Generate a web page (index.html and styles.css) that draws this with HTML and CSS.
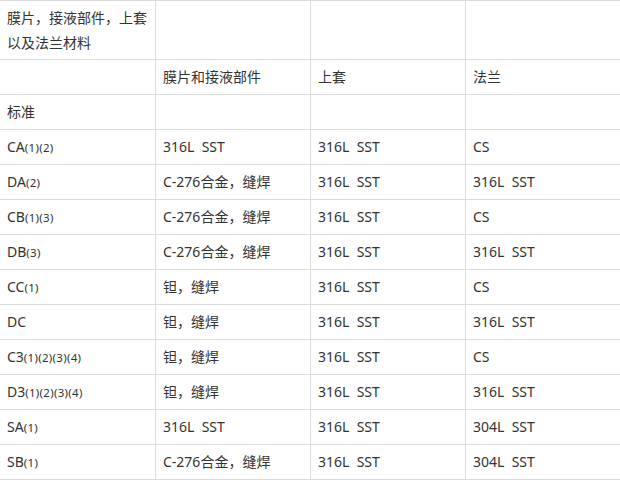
FILE: index.html
```html
<!DOCTYPE html>
<html lang="zh-CN">
<head>
<meta charset="utf-8">
<title>材料表</title>
<link rel="stylesheet" href="styles.css">
</head>
<body>
<table class="spec">
  <colgroup><col class="c1"><col class="c2"><col class="c3"><col class="c4"></colgroup>
  <tbody>
    <tr class="head"><td>膜片，接液部件，上套以及法兰材料</td><td></td><td></td><td></td></tr>
    <tr><td></td><td>膜片和接液部件</td><td>上套</td><td>法兰</td></tr>
    <tr><td>标准</td><td></td><td></td><td></td></tr>
    <tr><td>CA<span class="n">(1)(2)</span></td><td>316L&nbsp; SST</td><td>316L&nbsp; SST</td><td>CS</td></tr>
    <tr><td>DA<span class="n">(2)</span></td><td>C-276合金，缝焊</td><td>316L&nbsp; SST</td><td>316L&nbsp; SST</td></tr>
    <tr><td>CB<span class="n">(1)(3)</span></td><td>C-276合金，缝焊</td><td>316L&nbsp; SST</td><td>CS</td></tr>
    <tr><td>DB<span class="n">(3)</span></td><td>C-276合金，缝焊</td><td>316L&nbsp; SST</td><td>316L&nbsp; SST</td></tr>
    <tr><td>CC<span class="n">(1)</span></td><td>钽，缝焊</td><td>316L&nbsp; SST</td><td>CS</td></tr>
    <tr><td>DC</td><td>钽，缝焊</td><td>316L&nbsp; SST</td><td>316L&nbsp; SST</td></tr>
    <tr><td>C3<span class="n">(1)(2)(3)(4)</span></td><td>钽，缝焊</td><td>316L&nbsp; SST</td><td>CS</td></tr>
    <tr><td>D3<span class="n">(1)(2)(3)(4)</span></td><td>钽，缝焊</td><td>316L&nbsp; SST</td><td>316L&nbsp; SST</td></tr>
    <tr><td>SA<span class="n">(1)</span></td><td>316L&nbsp; SST</td><td>316L&nbsp; SST</td><td>304L&nbsp; SST</td></tr>
    <tr><td>SB<span class="n">(1)</span></td><td>C-276合金，缝焊</td><td>316L&nbsp; SST</td><td>304L&nbsp; SST</td></tr>
  </tbody>
</table>
</body>
</html>
```

FILE: styles.css
```css
html, body {
  margin: 0;
  padding: 0;
  background: #fff;
  overflow: hidden;
}
.spec {
  border-collapse: separate;
  border-spacing: 0;
  table-layout: fixed;
  width: 621px;
  font-family: "Noto Sans", "Noto Sans CJK SC", sans-serif;
  font-size: 14px;
  color: #333;
}
.c1 { width: 156px; }
.c2, .c3, .c4 { width: 155px; }
.spec td {
  box-sizing: border-box;
  height: 35px;
  padding: 0 6px 0 7px;
  line-height: 20px;
  vertical-align: middle;
  border-right: 1px solid #dcdcdc;
  border-bottom: 1px solid #dcdcdc;
  word-break: break-all;
}
.spec tr.head td {
  height: 60px;
  border-top: 1px solid #dcdcdc;
  line-height: 25px;
}
.n {
  font-size: 11.5px;
  letter-spacing: 0.3px;
}
```
